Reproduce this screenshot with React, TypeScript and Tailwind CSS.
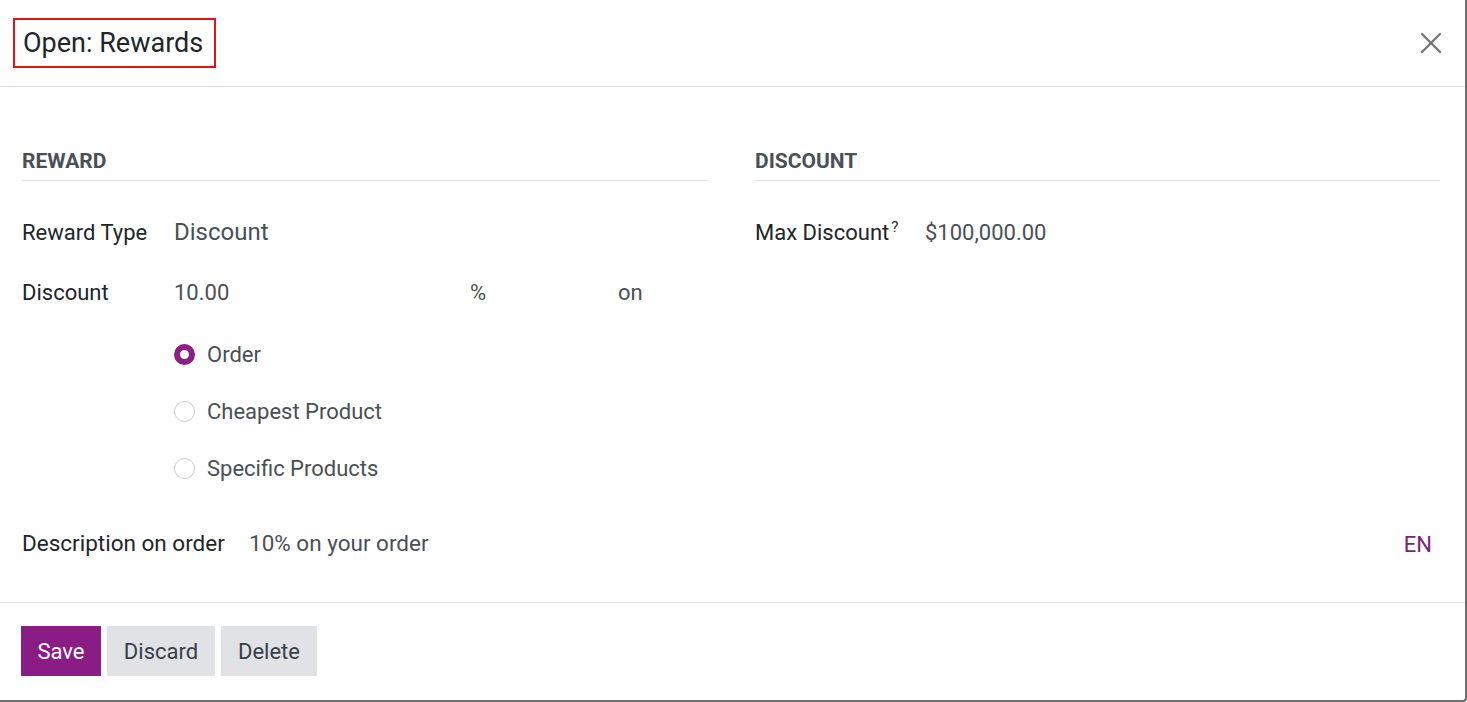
import { X } from 'lucide-react';

function Radio({ label, checked }: { label: string; checked?: boolean }) {
  return (
    <div className="flex h-[57px] items-center gap-[12px]">
      {checked ? (
        <span className="box-border h-[21px] w-[21px] rounded-full border-[6px] border-[#8b1f86] bg-white" />
      ) : (
        <span className="box-border h-[21px] w-[21px] rounded-full border border-[#c8c8c8] bg-white" />
      )}
      <span className="text-[22px] text-[#4a4f55]">{label}</span>
    </div>
  );
}

export default function App() {
  return (
    <div
      className="box-border flex h-[702px] w-full flex-col rounded-br-[4px] border-r-[2px] border-b-[2px] border-[#6e6e6e] bg-white"
      style={{ fontFamily: 'Roboto, "Noto Sans", sans-serif' }}
    >
      {/* Header */}
      <div className="flex h-[87px] shrink-0 items-center justify-between border-b border-[#dedede] pl-[13px] pr-[16px]">
        <div className="box-border flex h-[50px] items-center border-[2px] border-[#e0121a] pl-[8px] pr-[11px] text-[27px] text-[#212529]">
          Open: Rewards
        </div>
        <X size={36} strokeWidth={1.6} className="text-[#777777]" />
      </div>

      {/* Body */}
      <div className="flex-1 pl-[22px] pr-[25px] pt-[61px]">
        <div className="grid grid-cols-2 gap-[48px]">
          <div>
            <div className="border-b border-[#dee2e6] pb-[6px] text-[21px] font-bold leading-[26px] text-[#495057]">
              REWARD
            </div>
            <div className="mt-[21px] flex h-[60px] items-center">
              <span className="w-[152px] text-[22px] text-[#212529]">Reward Type</span>
              <span className="text-[24px] text-[#4a4f55]">Discount</span>
            </div>
            <div className="flex h-[60px] items-center">
              <span className="w-[152px] text-[22px] text-[#212529]">Discount</span>
              <span className="w-[296px] text-[22px] text-[#4a4f55]">10.00</span>
              <span className="w-[148px] text-[22px] text-[#4a4f55]">%</span>
              <span className="text-[22px] text-[#4a4f55]">on</span>
            </div>
            <div className="mt-[4px] pl-[152px]">
              <Radio label="Order" checked />
              <Radio label="Cheapest Product" />
              <Radio label="Specific Products" />
            </div>
          </div>
          <div>
            <div className="border-b border-[#dee2e6] pb-[6px] text-[21px] font-bold leading-[26px] text-[#495057]">
              DISCOUNT
            </div>
            <div className="mt-[21px] flex h-[60px] items-center">
              <span className="w-[170px] text-[22px] text-[#212529]">
                Max Discount<sup className="ml-[2px] text-[15px]">?</sup>
              </span>
              <span className="text-[22px] text-[#4a4f55]">$100,000.00</span>
            </div>
          </div>
        </div>

        <div className="mt-[17px] flex h-[60px] items-center pr-[8px]">
          <span className="w-[227px] text-[22.5px] text-[#212529]">Description on order</span>
          <span className="flex-1 text-[22.5px] text-[#4a4f55]">10% on your order</span>
          <span className="text-[22px] text-[#7b2374]">EN</span>
        </div>
      </div>

      {/* Footer */}
      <div className="flex h-[98px] shrink-0 gap-[6px] border-t border-[#dedede] pl-[21px] pt-[23px]">
        <button className="h-[50px] w-[80px] bg-[#8b1c85] text-[22px] text-white">Save</button>
        <button className="h-[50px] w-[108px] bg-[#e0e2e6] text-[22px] text-[#374049]">Discard</button>
        <button className="h-[50px] w-[96px] bg-[#e0e2e6] text-[22px] text-[#374049]">Delete</button>
      </div>
    </div>
  );
}
